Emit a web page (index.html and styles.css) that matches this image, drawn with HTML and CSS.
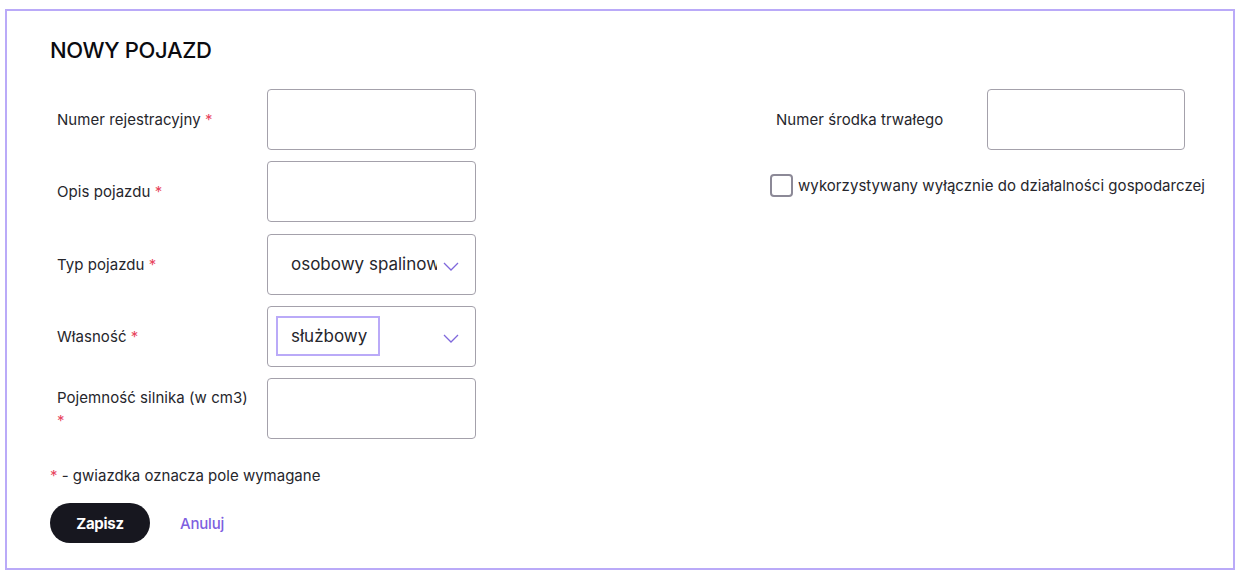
FILE: index.html
```html
<!DOCTYPE html>
<html lang="pl">
<head>
<meta charset="utf-8">
<title>Nowy pojazd</title>
<link rel="stylesheet" href="styles.css">
</head>
<body>
<div class="card">
  <h1 class="title">NOWY POJAZD</h1>
  <div class="form">
    <div class="col-left">
      <div class="row">
        <label class="label">Numer rejestracyjny <span class="req">*</span></label>
        <div class="input"></div>
      </div>
      <div class="row">
        <label class="label">Opis pojazdu <span class="req">*</span></label>
        <div class="input"></div>
      </div>
      <div class="row">
        <label class="label">Typ pojazdu <span class="req">*</span></label>
        <div class="input select">
          <span class="select-value">osobowy spalinowy</span>
          <svg class="chevron" width="16" height="9" viewBox="0 0 16 9"><path d="M1 1 L8 8 L15 1" fill="none" stroke="#7f68dc" stroke-width="1.3"/></svg>
        </div>
      </div>
      <div class="row">
        <label class="label">Własność <span class="req">*</span></label>
        <div class="input select">
          <span class="select-value focused">służbowy</span>
          <svg class="chevron" width="16" height="9" viewBox="0 0 16 9"><path d="M1 1 L8 8 L15 1" fill="none" stroke="#7f68dc" stroke-width="1.3"/></svg>
        </div>
      </div>
      <div class="row">
        <label class="label">Pojemność silnika (w cm3) <span class="req">*</span></label>
        <div class="input"></div>
      </div>
      <p class="note"><span class="req">*</span> - gwiazdka oznacza pole wymagane</p>
      <div class="actions">
        <button class="btn-save">Zapisz</button>
        <a class="btn-cancel">Anuluj</a>
      </div>
    </div>
    <div class="col-right">
      <div class="row">
        <label class="label label-wide">Numer środka trwałego</label>
        <div class="input input-narrow"></div>
      </div>
      <div class="check-row">
        <span class="checkbox"></span>
        <span class="check-text">wykorzystywany wyłącznie do działalności gospodarczej</span>
      </div>
    </div>
  </div>
</div>
</body>
</html>
```
FILE: styles.css
```css
* { box-sizing: border-box; }
html, body { margin: 0; padding: 0; background: #fff; }
body {
  font-family: Inter, "Noto Sans", sans-serif;
  color: #1f1f24;
  padding: 9px 4px 5px 5px;
}
.card {
  border: 2px solid #baaaf8;
  height: 561px;
  padding: 0 0 0 43px;
}
.title {
  margin: 26px 0 0 0;
  font-size: 22px;
  font-weight: 500;
  line-height: 26px;
  color: #0b0b10;
  letter-spacing: -0.35px;
}
.form {
  display: flex;
  margin-top: 26px;
}
.col-left { width: 720px; }
.row {
  display: flex;
  align-items: center;
  margin-bottom: 11.25px;
}
.label {
  width: 217px;
  padding: 0 14px 0 7px;
  font-size: 15px;
  line-height: 23px;
  color: #26262c;
  letter-spacing: 0.05px;
}
.label-wide { width: 217px; padding: 0 14px 0 6px; }
.req { color: #e8455e; }
.input {
  width: 209px;
  height: 61px;
  border: 1px solid #a4a1ab;
  border-radius: 4px;
  background: #fff;
}
.input-narrow { width: 198px; }
.select {
  display: flex;
  align-items: center;
  position: relative;
  overflow: hidden;
  padding-left: 8px;
}
.select-value {
  font-size: 17px;
  color: #26262c;
  padding: 7px 0 7px 13px;
  white-space: nowrap;
  max-width: 163px;
  overflow: hidden;
  line-height: 22px;
  border: 2px solid transparent;
}
.select-value.focused {
  border-color: #baaaf8;
  padding: 7px 11px 7px 13px;
}
.chevron {
  position: absolute;
  right: 16px;
  top: 27px;
}
.note {
  margin: 27px 0 0 0;
  font-size: 15px;
  line-height: 20px;
  color: #26262c;
}
.actions {
  display: flex;
  align-items: center;
  margin-top: 17px;
}
.btn-save {
  width: 100px;
  height: 40px;
  border: none;
  border-radius: 20px;
  background: #17171f;
  color: #fff;
  font-family: Inter, sans-serif;
  font-weight: 700;
  font-size: 15px;
  letter-spacing: -0.3px;
}
.btn-cancel {
  margin-left: 30px;
  color: #7e5fe0;
  font-size: 15px;
  font-weight: 500;
  letter-spacing: -0.2px;
}
.check-row {
  display: flex;
  align-items: center;
  margin-top: 24px;
}
.checkbox {
  width: 23px;
  height: 23px;
  border: 2px solid #8c8997;
  border-radius: 4px;
  margin-right: 5px;
}
.check-text {
  font-size: 15px;
  color: #26262c;
  letter-spacing: 0.05px;
}
```
